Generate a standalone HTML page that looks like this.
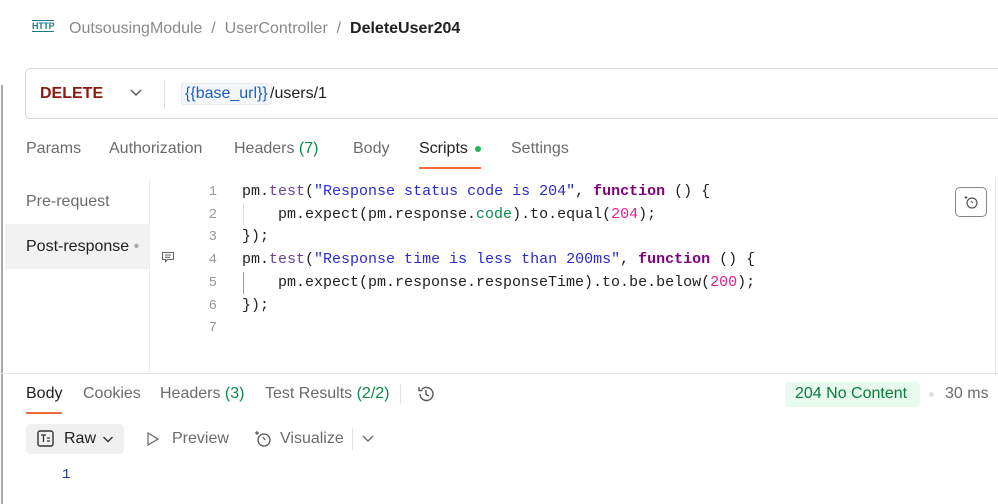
<!DOCTYPE html>
<html><head><meta charset="utf-8"><style>
*{margin:0;padding:0;box-sizing:border-box}
body{width:998px;height:504px;overflow:hidden;background:#fff;font-family:"Liberation Sans",sans-serif;position:relative;color:#212121}
.a{position:absolute;white-space:nowrap}
.t{font-size:16px;color:#6b6b6b}
.code{font-family:"Liberation Mono",monospace;font-size:15px;color:#212121;white-space:pre}
.ln{font-family:"Liberation Mono",monospace;font-size:14px;color:#9a9a9a;width:20px;text-align:right}
.kw{color:#800080;font-weight:bold}
.str{color:#2a2ad6}
.num{color:#e91e8c}
.fn{color:#6a3ea0}
.g{color:#0b8a4a}
</style></head><body>
<div class="a" style="left:1px;top:85px;width:2px;height:419px;background:#a8a8a8"></div>
<div class="a" style="left:32px;top:20px;font-size:9px;font-weight:bold;color:#1a7c8c;border-top:1px solid #1a7c8c;border-bottom:1px solid #1a7c8c;line-height:10px;letter-spacing:-.3px">HTTP</div>
<div class="a" style="left:69px;top:20px;font-size:16px;color:#8a8a8a">OutsousingModule &nbsp;/&nbsp; UserController &nbsp;/&nbsp; <span style="color:#212121;font-weight:bold">DeleteUser204</span></div>
<div class="a" style="left:25px;top:68px;width:990px;height:51px;border:1px solid #d6d6d6;border-radius:5px"></div>
<div class="a" style="left:40px;top:85px;font-size:16px;font-weight:bold;color:#8b1a10">DELETE</div>
<svg class="a" style="left:129px;top:88px" width="14" height="10"><path d="M2 2l5 5 5-5" stroke="#555" stroke-width="1.4" fill="none"/></svg>
<div class="a" style="left:164px;top:80px;width:1px;height:28px;background:#e0e0e0"></div>
<div class="a" style="left:181px;top:83px;height:22px;padding:2px 3px;background:#f4f6fa;border:1px solid #e6e9ee;border-radius:3px;font-size:16px;color:#1a5fc2;line-height:16px">{{base_url}}</div>
<div class="a" style="left:270px;top:85px;font-size:16px;color:#212121">/users/1</div>
<div class="a t" style="left:26px;top:140px">Params</div>
<div class="a t" style="left:109px;top:140px">Authorization</div>
<div class="a t" style="left:234px;top:140px">Headers <span class="g">(7)</span></div>
<div class="a t" style="left:353px;top:140px">Body</div>
<div class="a t" style="left:419px;top:140px;color:#212121">Scripts</div>
<div class="a" style="left:475px;top:146px;width:6px;height:6px;border-radius:3px;background:#1db954"></div>
<div class="a" style="left:419px;top:167px;width:62px;height:2px;background:#f26b3a"></div>
<div class="a t" style="left:511px;top:140px">Settings</div>
<div class="a t" style="left:26px;top:193px">Pre-request</div>
<div class="a" style="left:5px;top:224px;width:144px;height:45px;background:#f2f2f2"></div>
<div class="a t" style="left:26px;top:238px;color:#212121">Post-response <span style="color:#aaa">•</span></div>
<div class="a" style="left:149px;top:179px;width:1px;height:194px;background:#ececec"></div>
<svg class="a" style="left:161px;top:251px" width="14" height="12"><path d="M1.5 1.5h11v7h-6l-2 2v-2h-3z M4 4h6M4 6.3h5" stroke="#666" stroke-width="1.1" fill="none"/></svg>
<div class="a ln" style="left:197px;top:181px;line-height:22.7px">1<br>2<br>3<br>4<br>5<br>6<br>7</div>
<div class="a" style="left:243px;top:204px;width:1px;height:22px;background:#ddd"></div>
<div class="a" style="left:243px;top:272px;width:1px;height:22px;background:#999"></div>
<div class="a code" style="left:242px;top:181px;line-height:22.7px">pm.<span class="fn">test</span>(<span class="str">"Response status code is 204"</span>, <span class="kw">function</span> () {
    pm.expect(pm.response.<span class="g">code</span>).to.equal(<span class="num">204</span>);
});
pm.<span class="fn">test</span>(<span class="str">"Response time is less than 200ms"</span>, <span class="kw">function</span> () {
    pm.expect(pm.response.responseTime).to.be.below(<span class="num">200</span>);
});</div>
<div class="a" style="left:955px;top:187px;width:32px;height:30px;border:1px solid #888;border-radius:5px"></div>
<svg class="a" style="left:962px;top:193px" width="18" height="18"><circle cx="10" cy="10" r="5" stroke="#555" stroke-width="1.2" fill="none"/><path d="M4 3v3M2.5 4.5h3M9 8l2 2" stroke="#555" stroke-width="1.1"/></svg>
<div class="a" style="left:995px;top:179px;width:1px;height:194px;background:#e6e6e6"></div>
<div class="a" style="left:0;top:373px;width:998px;height:1px;background:#e6e6e6"></div>
<div class="a t" style="left:26px;top:385px;color:#212121">Body</div>
<div class="a" style="left:26px;top:412px;width:36px;height:2px;background:#f26b3a"></div>
<div class="a t" style="left:83px;top:385px">Cookies</div>
<div class="a t" style="left:160px;top:385px">Headers <span class="g">(3)</span></div>
<div class="a t" style="left:265px;top:385px">Test Results <span class="g">(2/2)</span></div>
<div class="a" style="left:400px;top:384px;width:1px;height:20px;background:#e0e0e0"></div>
<svg class="a" style="left:416px;top:384px" width="20" height="20"><path d="M4 10a6.5 6.5 0 1 0 2-4.7M3 3v3.5h3.5M10 6v4.5l3 1.5" stroke="#555" stroke-width="1.4" fill="none"/></svg>
<div class="a" style="left:785px;top:382px;width:135px;height:25px;background:#e6faee;border-radius:4px"></div>
<div class="a" style="left:795px;top:385px;font-size:16px;color:#0b7a3e">204 No Content</div>
<div class="a" style="left:929px;top:392px;width:5px;height:5px;border-radius:3px;background:#ddd"></div>
<div class="a t" style="left:945px;top:385px">30 ms</div>
<div class="a" style="left:26px;top:424px;width:98px;height:30px;background:#f0f0f0;border-radius:4px"></div>
<svg class="a" style="left:36px;top:429px" width="20" height="20"><rect x="2" y="2" width="15" height="15" rx="2" stroke="#333" stroke-width="1.4" fill="none"/><path d="M5 6h5M7.5 6v7M11 9h3M11 12h3" stroke="#333" stroke-width="1.3"/></svg>
<div class="a" style="left:64px;top:430px;font-size:16px;color:#212121">Raw</div>
<svg class="a" style="left:102px;top:434px" width="12" height="10"><path d="M1.5 3l4.5 4.5 4.5-4.5" stroke="#333" stroke-width="1.4" fill="none"/></svg>
<svg class="a" style="left:146px;top:431px" width="14" height="16"><path d="M2 2l10 6-10 6z" stroke="#666" stroke-width="1.2" fill="none"/></svg>
<div class="a t" style="left:172px;top:430px">Preview</div>
<svg class="a" style="left:252px;top:428px" width="22" height="22"><circle cx="12" cy="12" r="6" stroke="#555" stroke-width="1.3" fill="none"/><path d="M5 3v4M3 5h4M11 9l2 3" stroke="#555" stroke-width="1.2"/></svg>
<div class="a t" style="left:280px;top:430px">Visualize</div>
<div class="a" style="left:352px;top:428px;width:1px;height:22px;background:#e0e0e0"></div>
<svg class="a" style="left:361px;top:434px" width="14" height="10"><path d="M2 2l5 5 5-5" stroke="#666" stroke-width="1.4" fill="none"/></svg>
<div class="a code" style="left:62px;top:467px;color:#1a3a8a;font-size:14px">1</div>
</body></html>
